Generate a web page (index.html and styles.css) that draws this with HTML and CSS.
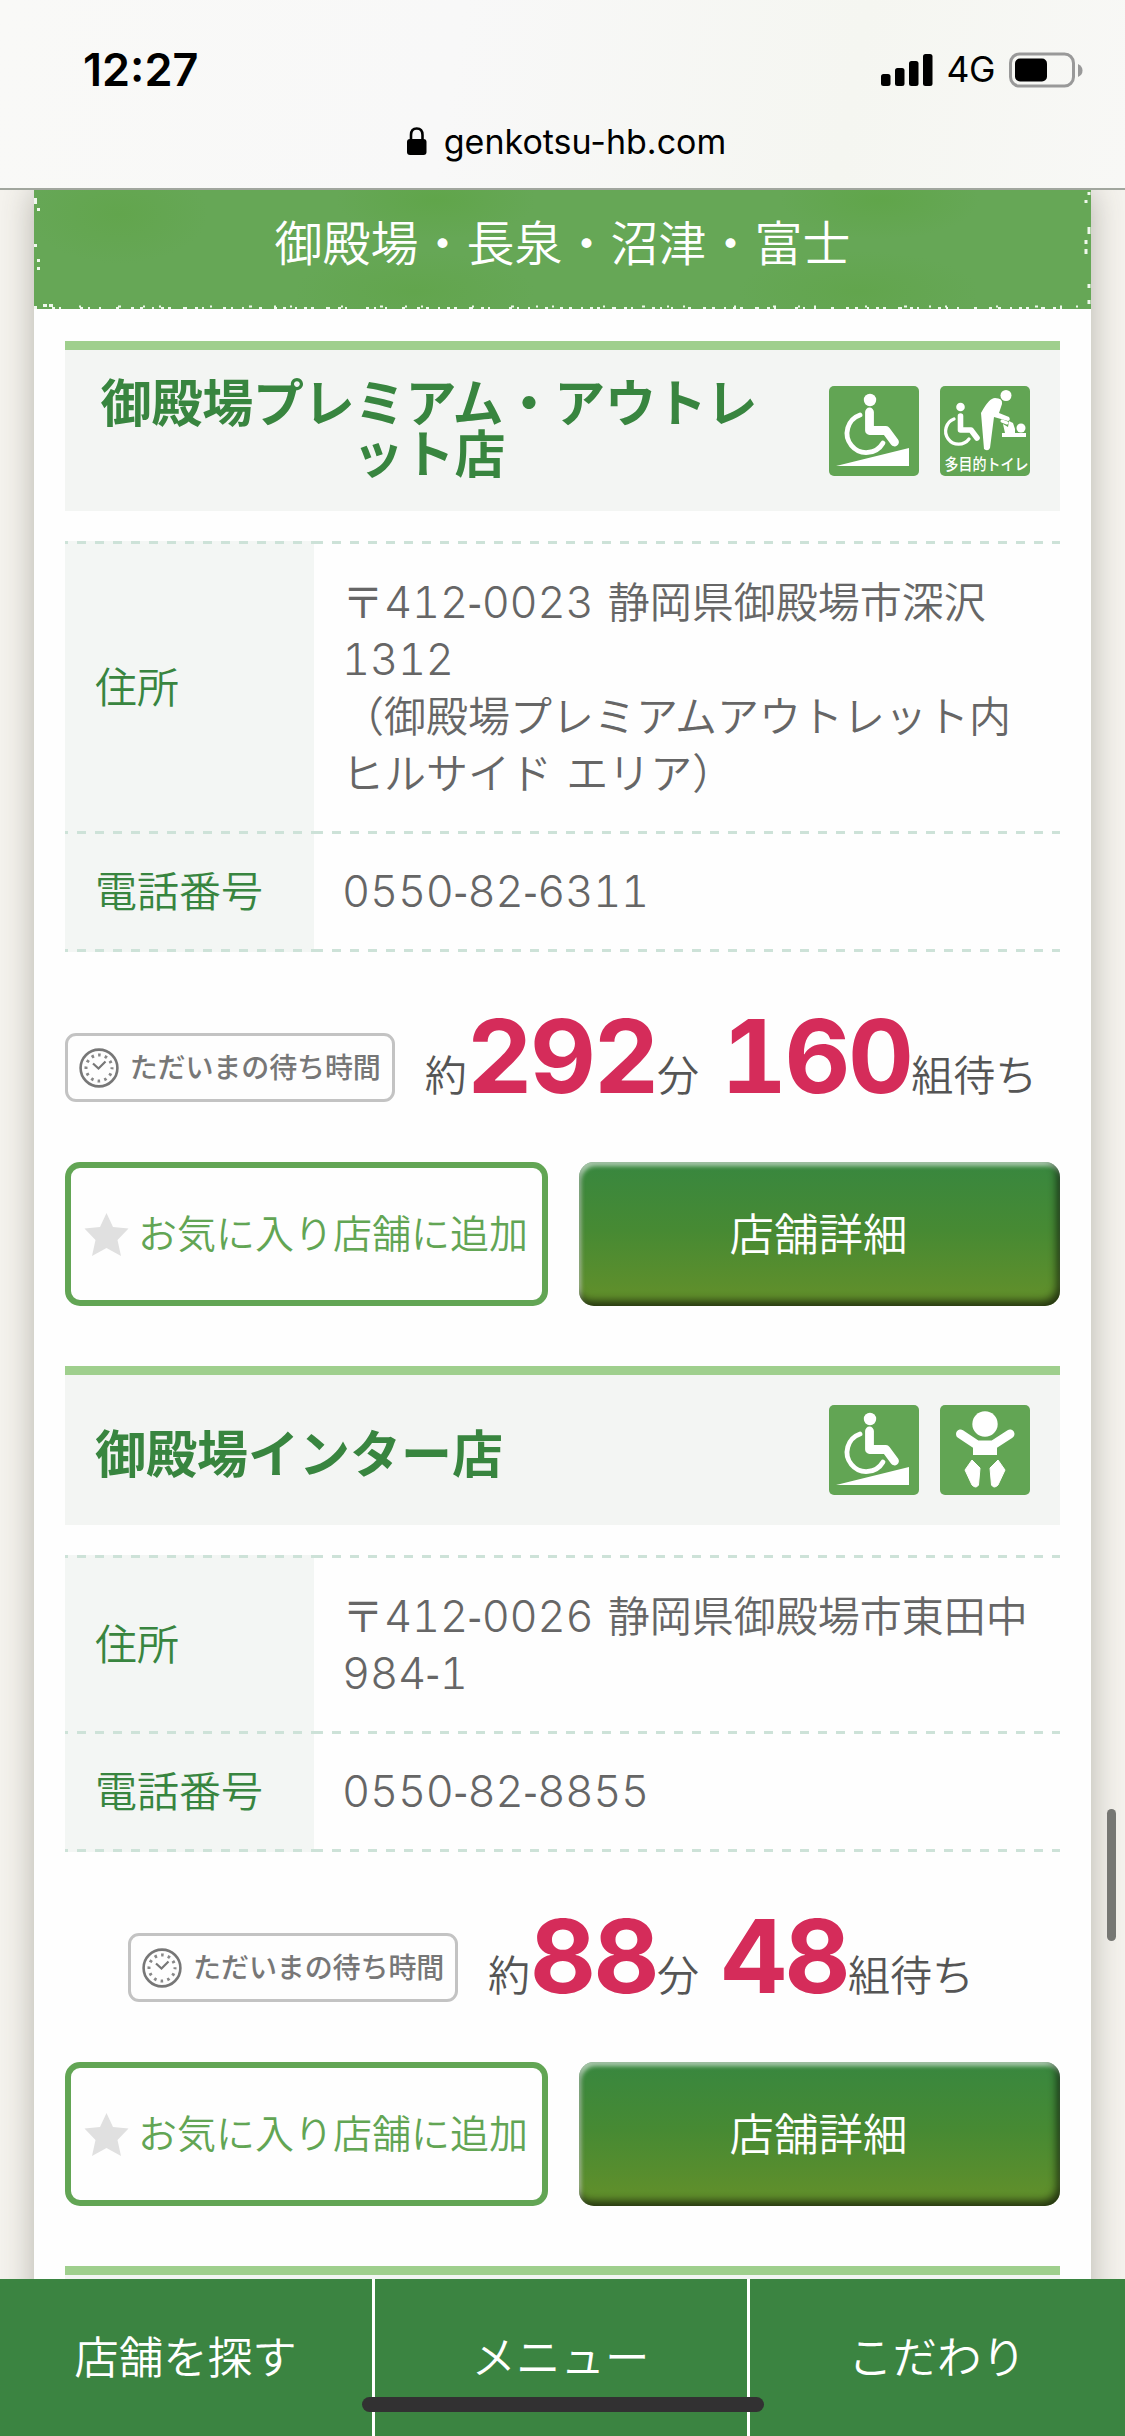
FILE: index.html
```html
<!DOCTYPE html>
<html lang="ja">
<head>
<meta charset="utf-8">
<title>御殿場・長泉・沼津・富士</title>
<link rel="stylesheet" href="styles.css">
</head>
<body>
<svg class="defs" width="0" height="0" aria-hidden="true">
  <defs>
    <symbol id="i-slope" viewBox="0 0 90 90">
      <rect width="90" height="90" rx="5" fill="#62a554"/>
      <circle cx="41" cy="14" r="6.2" fill="#fff"/>
      <path d="M40.500 26V44.500H57L65.500 56" fill="none" stroke="#fff" stroke-width="8.800" stroke-linecap="round" stroke-linejoin="round"/>
      <path d="M31 29A19.300 19.300 0 1 0 54 57" fill="none" stroke="#fff" stroke-width="4.800" stroke-linecap="round"/>
      <path d="M7 80L80 62V80Z" fill="#fff"/>
    </symbol>
    <symbol id="i-baby" viewBox="0 0 90 90">
      <rect width="90" height="90" rx="5" fill="#62a554"/>
      <circle cx="45" cy="19" r="12.700" fill="#fff"/>
      <path d="M20.500 29L37 40H53L70 29" fill="none" stroke="#fff" stroke-width="9" stroke-linecap="round" stroke-linejoin="round"/>
      <path d="M33 34Q45 40 57 34V50H33Z" fill="#fff"/>
      <path d="M32 55L40 63L38.500 80Q36 84 32 80L25 65ZM58 55L50 63L51.500 80Q54 84 58 80L65 65Z" fill="#fff" stroke="#fff" stroke-width="1"/>
    </symbol>
    <symbol id="i-toilet" viewBox="0 0 90 90">
      <rect width="90" height="90" rx="5" fill="#62a554"/>
      <circle cx="20.500" cy="21" r="4.300" fill="#fff"/>
      <path d="M20.500 30V44H31L37 52" fill="none" stroke="#fff" stroke-width="5.600" stroke-linecap="round" stroke-linejoin="round"/>
      <path d="M14 33A13 13 0 1 0 29 53" fill="none" stroke="#fff" stroke-width="3.300" stroke-linecap="round"/>
      <circle cx="66" cy="9.500" r="5.500" fill="#fff"/>
      <path d="M41 27Q49 12 55 12Q63 12 62 18L59 27L69 31Q71 34 68 35L54 31L50 62Q48 66 44 63Z" fill="#fff"/>
      <path d="M62 47H86V51H62ZM63 38L68 41L69 35L73 37L75 43V47H65Z" fill="#fff"/>
      <path d="M62 35L67 37" stroke="#fff" stroke-width="3" stroke-linecap="round"/>
      <circle cx="81" cy="42" r="4.500" fill="#fff"/>
      <text x="46.500" y="83.500" text-anchor="middle" class="toilet-label" textLength="84" lengthAdjust="spacingAndGlyphs">多目的トイレ</text>
    </symbol>
    <symbol id="i-clock" viewBox="0 0 40 40">
      <circle cx="20" cy="20" r="18.400" fill="none" stroke="#777" stroke-width="2.600"/>
      <circle cx="20" cy="20" r="13" fill="none" stroke="#888" stroke-width="3" stroke-dasharray="2.600 4.207" stroke-dashoffset="1.300"/>
      <path d="M14 15.500L19.500 20.500L26.500 13.500" fill="none" stroke="#777" stroke-width="2.200"/>
    </symbol>
    <symbol id="i-star" viewBox="0 0 45 45">
      <path d="M22.500 1L29 15L44.500 16.500L33.500 28L37 44L22.500 36L8 44L11.500 28L.5 16.500L16 15Z" fill="#e0e0e0"/>
    </symbol>
  </defs>
</svg>

<header class="browser">
  <div class="status">
    <div class="clock">12:27</div>
    <div class="signals">
      <svg width="52" height="34" viewBox="0 0 52 34"><rect x="0" y="21" width="9.500" height="12" rx="2.500"/><rect x="14" y="15" width="9.500" height="18" rx="2.500"/><rect x="28" y="8" width="9.500" height="25" rx="2.500"/><rect x="42" y="1" width="9.500" height="32" rx="2.500"/></svg>
      <span class="net">4G</span>
      <svg width="75" height="36" viewBox="0 0 75 36"><rect x="1.500" y="2" width="63" height="32" rx="9" fill="none" stroke="#999" stroke-width="3"/><rect x="6" y="6.500" width="32" height="23" rx="5"/><path d="M69 12Q73.500 14 73.500 18.500T69 25Z" fill="#999"/></svg>
    </div>
  </div>
  <div class="url">
    <svg width="20" height="28" viewBox="0 0 20 28"><rect x="0" y="12" width="19.500" height="16" rx="3"/><path d="M4 13V8Q4 1.500 9.750 1.500T15.500 8V13" fill="none" stroke="#000" stroke-width="2.600"/></svg>
    <span>genkotsu-hb.com</span>
  </div>
</header>

<main class="page">
  <div class="sheet">
    <h1 class="area">
      <span>御殿場・長泉・沼津・富士</span>
      <svg class="stitch" width="1057" height="120" viewBox="0 0 1057 120" fill="none" stroke="#eff8ec" stroke-width="3">
        <path d="M1.500 8V14M4.500 18V21M1.500 54V57M4.500 69V72M4.500 77V80M1.500 116V119" />
        <path d="M1055 2V5M1052 10V13M1055 37V44M1052 50V54M1052 59V64M1055 94V98M1055 110V114"/>
        <path d="M9 115.500H13M15 115.500H19" />
        <path d="M18 118H1045" stroke-dasharray="3 4 2 19 3 5 2 9 2 15 3 12 3 6 3 9 2 7 3 4 3 12 4 8" stroke-width="2"/>
        <path d="M45 116.500H1045" stroke-dasharray="2 37 3 22 2 14 2 49" stroke-width="2"/>
      </svg>
    </h1>

    <section class="shop">
      <div class="head head-tall">
        <h2>御殿場プレミアム・アウトレット店</h2>
        <div class="icons"><svg width="90" height="90"><use href="#i-slope"/></svg><svg width="90" height="90"><use href="#i-toilet"/></svg></div>
      </div>
      <dl class="info">
        <div class="row row-4"><dt>住所</dt><dd>〒<span class="num">412<i>-</i>0023</span> 静岡県御殿場市深沢<br><span class="num">1312</span><br>（御殿場プレミアムアウトレット内<br>ヒルサイド エリア）</dd></div>
        <div class="row"><dt>電話番号</dt><dd><span class="num">0550<i>-</i>82<i>-</i>6311</span></dd></div>
      </dl>
      <div class="wait">
        <div class="badge"><svg width="40" height="40"><use href="#i-clock"/></svg><span>ただいまの待ち時間</span></div>
        <p>約<b>292</b>分<b class="groups">160</b>組待ち</p>
      </div>
      <div class="actions">
        <a class="fav"><svg width="45" height="45"><use href="#i-star"/></svg><span>お気に入り店舗に追加</span></a>
        <a class="detail">店舗詳細</a>
      </div>
    </section>

    <section class="shop">
      <div class="head">
        <h2>御殿場インター店</h2>
        <div class="icons"><svg width="90" height="90"><use href="#i-slope"/></svg><svg width="90" height="90"><use href="#i-baby"/></svg></div>
      </div>
      <dl class="info">
        <div class="row row-2"><dt>住所</dt><dd>〒<span class="num">412<i>-</i>0026</span> 静岡県御殿場市東田中<br><span class="num">984<i>-</i>1</span></dd></div>
        <div class="row"><dt>電話番号</dt><dd><span class="num">0550<i>-</i>82<i>-</i>8855</span></dd></div>
      </dl>
      <div class="wait">
        <div class="badge"><svg width="40" height="40"><use href="#i-clock"/></svg><span>ただいまの待ち時間</span></div>
        <p>約<b>88</b>分<b class="groups">48</b>組待ち</p>
      </div>
      <div class="actions">
        <a class="fav"><svg width="45" height="45"><use href="#i-star"/></svg><span>お気に入り店舗に追加</span></a>
        <a class="detail">店舗詳細</a>
      </div>
    </section>

    <section class="shop"><div class="head"></div></section>
  </div>
</main>

<nav class="tabs"><a>店舗を探す</a><a>メニュー</a><a>こだわり</a></nav>
<div class="scrollbar"></div>
<div class="home-bar"></div>
</body>
</html>
```
FILE: styles.css
```css
* { box-sizing: border-box; }

body {
  margin: 0;
  width: 1125px;
  height: 2436px;
  display: flex;
  flex-direction: column;
  position: relative;
  overflow: hidden;
  background: #f5f3ee;
  color: #666;
  font-family: "Noto Sans CJK JP", sans-serif;
  font-weight: 350;
  font-size: 42px;
  text-spacing-trim: space-all;
}

h1, h2, p, dl, dd { margin: 0; }
.defs { position: absolute; }
.toilet-label { font: 500 16px "Noto Sans CJK JP", sans-serif; fill: #fff; }

/* Browser chrome */
.browser {
  flex: none;
  height: 190px;
  background: linear-gradient(100deg, #f9f9f7, #f8f8f8 40%, #f5f6f1 75%, #f8f8f6);
  border-bottom: 2px solid #a1a69e;
  color: #000;
  font-family: Inter, sans-serif;
}
.status {
  height: 115px;
  padding: 24px 41px 0 83px;
  display: flex;
  justify-content: space-between;
  align-items: center;
}
.clock { font-size: 45px; font-weight: 600; }
.signals { display: flex; align-items: center; gap: 14px; }
.net { font-size: 35.500px; font-weight: 400; letter-spacing: -.5px; line-height: 36px; padding-top: 1px; }
.url {
  display: flex;
  justify-content: center;
  align-items: center;
  gap: 17px;
  height: 52px;
  padding-left: 8px;
  font-size: 34px;
  font-weight: 400;
}

/* Page */
.page { flex: 1; min-height: 0; overflow: hidden; padding: 0 34px; }
.sheet { height: 2200px; background: #fefefe; box-shadow: 0 0 32px rgba(60, 55, 40, .34); }
.area {
  height: 119px;
  position: relative;
  display: flex;
  justify-content: center;
  padding-top: 15px;
  color: #fff;
  font-size: 48px;
  font-weight: 350;
  line-height: 70px;
  background:
    radial-gradient(ellipse 90px 50px at 8% 20%, #62a54d, transparent),
    radial-gradient(ellipse 100px 40px at 38% 8%, #60a54a, transparent),
    radial-gradient(ellipse 100px 40px at 80% 8%, #60a54a, transparent),
    radial-gradient(ellipse 120px 40px at 36% 85%, #62a54d, transparent),
    radial-gradient(ellipse 120px 40px at 78% 85%, #62a54d, transparent),
    #66a756;
}
.stitch { position: absolute; left: 0; top: 0; }

.shop { padding: 0 31px; margin-top: 32px; }
.shop + .shop { margin-top: 60px; }
.head {
  height: 159px;
  border-top: 9px solid #9fcf8d;
  background: #f3f5f3;
  padding: 0 30px;
  display: flex;
  align-items: center;
  justify-content: space-between;
}
.head-tall { height: 170px; }
.head h2 {
  max-width: 668px;
  color: #38853f;
  font-size: 51px;
  font-weight: 700;
  line-height: 51px;
  text-align: center;
  padding-top: 2px;
}
.head-tall h2 { padding: 0 0 9px; letter-spacing: -.2px; }
.icons { display: flex; gap: 21px; }
.icons svg { display: block; }

.info { margin-top: 30px; }
.row { display: flex; height: 118px; }
.row-4 { height: 290px; }
.row-2 { height: 176px; }
.row dt, .row dd {
  display: flow-root;
  align-content: center;
  padding: 0 0 3px 30px;
  line-height: 57px;
  background-repeat: repeat-x;
  background-size: 18px 3px;
  background-image: linear-gradient(90deg, #cde2d8 9px, transparent 9px);
}
.row dt { width: 249px; color: #38853f; background-color: #f3f6f4; background-position: 12px 0; }
.row dd { flex: 1; padding-left: 28px; white-space: nowrap; word-spacing: 5px; background-position: 0 0; }
.info .row:last-child { height: 121px; }
.info .row:last-child dt,
.info .row:last-child dd {
  padding-bottom: 6px;
  background-image: linear-gradient(90deg, #cde2d8 9px, transparent 9px), linear-gradient(90deg, #cde2d8 9px, transparent 9px);
}
.info .row:last-child dt { background-position: 12px 0, 12px 100%; }
.info .row:last-child dd { background-position: 0 0, 0 100%; }
.num {
  font-family: Inter, sans-serif;
  font-size: 43.500px;
  font-weight: 300;
  font-feature-settings: "tnum";
  letter-spacing: -.2px;
  line-height: 1;
}
.num i { font-style: normal; font-family: "Liberation Sans", sans-serif; font-size: 42px; }

.wait { height: 210px; display: flex; justify-content: center; padding-right: 23px; gap: 30px; }
.badge {
  flex: none;
  margin-top: 81px;
  width: 330px;
  height: 69px;
  border: 3px solid #c3c3c3;
  border-radius: 11px;
  display: flex;
  align-items: center;
  padding-left: 11px;
  gap: 11px;
  color: #777;
  font-size: 28px;
  font-weight: 500;
  letter-spacing: -.1px;
  white-space: nowrap;
}
.badge span { line-height: 40px; padding-bottom: 3px; }
.badge svg { flex: none; }
.wait p { margin-top: 53px; line-height: 102px; white-space: nowrap; color: #555; }
.wait b {
  font-family: Inter, sans-serif;
  font-size: 102px;
  font-weight: 700;
  font-feature-settings: "tnum";
  letter-spacing: -2.500px;
  line-height: 102px;
  vertical-align: -2px;
  color: #d52c5a;
}
.wait .groups { margin-left: 22px; }

.actions { display: grid; grid-template-columns: 483px 481px; gap: 31px; height: 144px; }
.fav, .detail { border-radius: 15px; display: flex; align-items: center; white-space: nowrap; }
.fav {
  border: 6px solid #62a554;
  padding-left: 13px;
  gap: 9px;
  color: #62a554;
  font-size: 39px;
}
.fav span { padding-bottom: 6px; }
.detail {
  justify-content: center;
  padding: 0 2px 6px 0;
  color: #fff;
  font-size: 44.500px;
  background: linear-gradient(#38873f, #478a33 48%, #64902a);
  box-shadow: inset -3px -5px 8px rgba(0, 0, 0, .65), inset 2px 4px 4px rgba(255, 255, 255, .6);
}

/* Bottom bar */
.tabs {
  flex: none;
  height: 157px;
  display: grid;
  grid-template-columns: 375px 375px 375px;
  background: #3b8441;
  color: #fff;
  font-size: 44.500px;
}
.tabs a { display: flex; align-items: center; justify-content: center; padding: 0 1px 6px 0; border-right: 3px solid #fff; }
.tabs a:last-child { border: 0; }

.scrollbar {
  position: absolute;
  left: 1107px;
  top: 1809px;
  width: 9px;
  height: 132px;
  border-radius: 5px;
  background: #767773;
}
.home-bar {
  position: absolute;
  left: 362px;
  top: 2397px;
  width: 402px;
  height: 15px;
  border-radius: 8px;
  background: #323132;
}
```
